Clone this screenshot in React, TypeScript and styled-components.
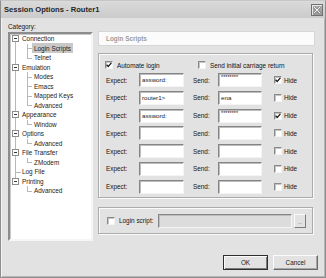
import styled, { createGlobalStyle, css } from "styled-components";

type TreeItem = {
  label: string;
  level: 0 | 1;
  expander?: boolean;
  selected?: boolean;
  last?: boolean;
};

const treeItems: TreeItem[] = [
  { label: "Connection", level: 0, expander: true },
  { label: "Login Scripts", level: 1, selected: true },
  { label: "Telnet", level: 1, last: true },
  { label: "Emulation", level: 0, expander: true },
  { label: "Modes", level: 1 },
  { label: "Emacs", level: 1 },
  { label: "Mapped Keys", level: 1 },
  { label: "Advanced", level: 1, last: true },
  { label: "Appearance", level: 0, expander: true },
  { label: "Window", level: 1, last: true },
  { label: "Options", level: 0, expander: true },
  { label: "Advanced", level: 1, last: true },
  { label: "File Transfer", level: 0, expander: true },
  { label: "ZModem", level: 1, last: true },
  { label: "Log File", level: 0 },
  { label: "Printing", level: 0, expander: true },
  { label: "Advanced", level: 1, last: true },
];

type ScriptRow = { expect: string; send: string; hide: boolean };

const scriptRows: ScriptRow[] = [
  { expect: "assword:", send: "********", hide: true },
  { expect: "router1>", send: "ena", hide: false },
  { expect: "assword:", send: "********", hide: true },
  { expect: "", send: "", hide: false },
  { expect: "", send: "", hide: false },
  { expect: "", send: "", hide: false },
  { expect: "", send: "", hide: false },
];

const GlobalStyle = createGlobalStyle`
  html, body {
    margin: 0;
    padding: 0;
    background: #ffffff;
  }
  body {
    font-family: "Liberation Sans", Arial, sans-serif;
    font-size: 6.4px;
    color: #141414;
  }
`;

const Window = styled.div`
  width: 326px;
  height: 278px;
  box-sizing: border-box;
  background: #e2e2e2;
  border: 1px solid #8e8e8e;
  border-top-color: #c6c6c6;
  box-shadow: inset 1px 1px 0 #f3f3f3, inset -1px -1px 0 #b6b6b6;
  display: flex;
  flex-direction: column;
`;

const TitleBar = styled.div`
  height: 17px;
  flex-shrink: 0;
  display: flex;
  align-items: center;
  justify-content: space-between;
  padding: 0 2px 0 3px;
  background: linear-gradient(#dadada, #cbcbcb);
`;

const TitleText = styled.span`
  font-weight: bold;
  font-size: 7.6px;
  color: #262626;
`;

const CloseButton = styled.div`
  width: 12px;
  height: 12px;
  box-sizing: border-box;
  margin-top: 1px;
  border: 1px solid #707070;
  background: linear-gradient(#b8b8b8, #999999);
  box-shadow: inset 1px 1px 0 #e6e6e6;
  display: flex;
  align-items: center;
  justify-content: center;
`;

const Body = styled.div`
  flex: 1;
  display: flex;
  flex-direction: column;
  padding: 4px 7px 0 7px;
`;

const Content = styled.div`
  display: flex;
  gap: 5px;
  align-items: flex-start;
`;

const LeftCol = styled.div`
  width: 85px;
  display: flex;
  flex-direction: column;
`;

const CategoryLabel = styled.div`
  height: 10px;
  line-height: 10px;
`;

const Tree = styled.div`
  height: 209px;
  box-sizing: border-box;
  background: #ffffff;
  border: 2px solid;
  border-color: #8c8c8c #f6f6f6 #f6f6f6 #8c8c8c;
  box-shadow: inset 1px 1px 0 #c9c9c9;
  display: flex;
  flex-direction: column;
`;

const TreeRow = styled.div`
  height: 9.5px;
  display: flex;
  align-items: stretch;
  color: #222222;
`;

const lineColor = "#b8b8b8";

const RootCell = styled.div<{ $top: boolean; $bottom: boolean; $dash?: boolean }>`
  position: relative;
  width: 10px;
  flex-shrink: 0;
  display: flex;
  align-items: center;
  padding-left: 2px;
  box-sizing: border-box;

  &::before {
    content: "";
    position: absolute;
    left: 5px;
    width: 1px;
    background: ${lineColor};
    top: ${(p) => (p.$top ? "0" : "50%")};
    bottom: ${(p) => (p.$bottom ? "0" : "50%")};
  }

  ${(p) =>
    p.$dash &&
    css`
      &::after {
        content: "";
        position: absolute;
        left: 5px;
        width: 6px;
        top: 50%;
        height: 1px;
        background: ${lineColor};
      }
    `}
`;

const Expander = styled.span`
  position: relative;
  z-index: 1;
  width: 7px;
  height: 7px;
  box-sizing: border-box;
  border: 1px solid #8c8c8c;
  background: #ffffff;

  &::after {
    content: "";
    position: absolute;
    left: 1px;
    right: 1px;
    top: 2px;
    height: 1px;
    background: #333333;
  }
`;

const ChildCell = styled.div<{ $last?: boolean }>`
  position: relative;
  width: 12px;
  flex-shrink: 0;

  &::before {
    content: "";
    position: absolute;
    left: 7px;
    top: 0;
    width: 1px;
    height: ${(p) => (p.$last ? "50%" : "100%")};
    background: ${lineColor};
  }

  &::after {
    content: "";
    position: absolute;
    left: 7px;
    top: 50%;
    width: 5px;
    height: 1px;
    background: ${lineColor};
  }
`;

const TreeLabel = styled.span<{ $selected?: boolean }>`
  display: flex;
  align-items: center;
  padding: 0 2px;
  background: ${(p) => (p.$selected ? "#c8c8c8" : "transparent")};
  height: 10px;
  align-self: center;
  white-space: nowrap;
`;

const RightCol = styled.div`
  width: 217px;
  margin-top: 9px;
  display: flex;
  flex-direction: column;
`;

const PageHeader = styled.div`
  height: 15px;
  box-sizing: border-box;
  background: #fbfbfb;
  border: 1px solid #d6d6d6;
  display: flex;
  align-items: center;
  padding-left: 7px;
  font-weight: bold;
  font-size: 6.4px;
  color: #9c9c9c;
`;

const GroupBox = styled.div<{ $gapTop: number }>`
  margin-top: ${(p) => p.$gapTop}px;
  margin-right: 2px;
  border: 1px solid #ababab;
  box-shadow: inset 1px 1px 0 #fafafa, 1px 1px 0 #fafafa;
  display: flex;
  flex-direction: column;
`;

const ScriptsBody = styled.div`
  padding: 6px 0 3px 6px;
  display: flex;
  flex-direction: column;
  gap: 3.75px;
`;

const OptionsRow = styled.div`
  height: 10px;
  display: flex;
  align-items: center;
  margin-bottom: -0.75px;
`;

const CheckOption = styled.label<{ $width?: number }>`
  display: flex;
  align-items: center;
  gap: 4px;
  width: ${(p) => (p.$width ? `${p.$width}px` : "auto")};
  white-space: nowrap;
`;

const CheckBox = styled.span`
  width: 8px;
  height: 8px;
  box-sizing: border-box;
  flex-shrink: 0;
  background: #ffffff;
  border: 1px solid;
  border-color: #8a8a8a #f4f4f4 #f4f4f4 #8a8a8a;
  box-shadow: inset 1px 1px 0 #c4c4c4;
  display: flex;
  align-items: center;
  justify-content: center;
`;

const ScriptRowBox = styled.div`
  height: 14px;
  display: flex;
  align-items: center;
`;

const RowLabel = styled.span<{ $width: number; $gap?: number }>`
  width: ${(p) => p.$width}px;
  margin-left: ${(p) => p.$gap ?? 0}px;
  flex-shrink: 0;
  padding-left: 1px;
`;

const Field = styled.div<{ $width: number; $disabled?: boolean; $small?: boolean }>`
  width: ${(p) => p.$width}px;
  height: 14px;
  box-sizing: border-box;
  flex-shrink: 0;
  background: ${(p) => (p.$disabled ? "#dcdcdc" : "#ffffff")};
  border: 1px solid;
  border-color: #858585 #f4f4f4 #f4f4f4 #858585;
  box-shadow: inset 1px 1px 0 #bdbdbd;
  padding: ${(p) => (p.$small ? "1px 0 0 2px" : "3px 0 0 2px")};
  font-size: ${(p) => (p.$small ? "5.5px" : "6.2px")};
  line-height: 1;
  color: #222222;
  overflow: hidden;
  white-space: nowrap;
`;

const HideOption = styled(CheckOption)`
  margin-left: 12px;
  gap: 2px;
`;

const LoginBody = styled.div`
  padding: 6px 0 5px 8px;
  display: flex;
  align-items: center;
`;

const BrowseButton = styled.div`
  width: 12px;
  height: 14px;
  margin-left: 2px;
  box-sizing: border-box;
  border: 1px solid;
  border-color: #fafafa #7c7c7c #7c7c7c #fafafa;
  background: #e2e2e2;
  display: flex;
  align-items: flex-end;
  justify-content: center;
  padding-bottom: 2px;
  font-size: 5px;
  color: #555;
`;

const ButtonRow = styled.div`
  margin-top: 14px;
  display: flex;
  justify-content: flex-end;
  gap: 5px;
`;

const DialogButton = styled.div<{ $default?: boolean }>`
  width: 45px;
  height: 15px;
  box-sizing: border-box;
  display: flex;
  align-items: center;
  justify-content: center;
  background: #e2e2e2;
  border: 1px solid;
  border-color: ${(p) => (p.$default ? "#2e2e2e" : "#fbfbfb #6a6a6a #6a6a6a #fbfbfb")};
  box-shadow: ${(p) =>
    p.$default
      ? "inset 1px 1px 0 #fbfbfb, inset -1px -1px 0 #7a7a7a"
      : "inset -1px -1px 0 #a6a6a6"};
  color: #1a1a1a;
`;

const Check = () => (
  <svg width="6" height="6" viewBox="0 0 6 6">
    <path d="M0.6 2.8 L2.2 4.5 L5.4 0.9" fill="none" stroke="#1a1a1a" strokeWidth="1.3" />
  </svg>
);

const CloseIcon = () => (
  <svg width="8" height="8" viewBox="0 0 8 8">
    <path d="M1 1 L7 7 M7 1 L1 7" stroke="#4a4a4a" strokeWidth="2.4" />
    <path d="M1 1 L7 7 M7 1 L1 7" stroke="#f2f2f2" strokeWidth="1.2" />
  </svg>
);

const CategoryTree = () => {
  const lastRootIndex = treeItems.map((t) => t.level).lastIndexOf(0);
  let parentIsLast = false;
  return (
    <Tree>
      {treeItems.map((item, i) => {
        if (item.level === 0) {
          parentIsLast = i === lastRootIndex;
          return (
            <TreeRow key={i}>
              <RootCell $top={i !== 0} $bottom={i !== lastRootIndex} $dash={!item.expander}>
                {item.expander && <Expander />}
              </RootCell>
              <TreeLabel>{item.label}</TreeLabel>
            </TreeRow>
          );
        }
        return (
          <TreeRow key={i}>
            <RootCell $top={!parentIsLast} $bottom={!parentIsLast} />
            <ChildCell $last={item.last} />
            <TreeLabel $selected={item.selected}>{item.label}</TreeLabel>
          </TreeRow>
        );
      })}
    </Tree>
  );
};

export default function App() {
  return (
    <>
      <GlobalStyle />
      <Window>
        <TitleBar>
          <TitleText>Session Options - Router1</TitleText>
          <CloseButton>
            <CloseIcon />
          </CloseButton>
        </TitleBar>
        <Body>
          <Content>
            <LeftCol>
              <CategoryLabel>Category:</CategoryLabel>
              <CategoryTree />
            </LeftCol>
            <RightCol>
              <PageHeader>Login Scripts</PageHeader>
              <GroupBox $gapTop={7}>
                <ScriptsBody>
                  <OptionsRow>
                    <CheckOption $width={93}>
                      <CheckBox>
                        <Check />
                      </CheckBox>
                      Automate login
                    </CheckOption>
                    <CheckOption>
                      <CheckBox />
                      Send initial carriage return
                    </CheckOption>
                  </OptionsRow>
                  {scriptRows.map((row, i) => (
                    <ScriptRowBox key={i}>
                      <RowLabel $width={33}>Expect:</RowLabel>
                      <Field $width={45}>{row.expect}</Field>
                      <RowLabel $width={25} $gap={8}>
                        Send:
                      </RowLabel>
                      <Field $width={44} $small={row.send.startsWith("*")}>
                        {row.send}
                      </Field>
                      <HideOption>
                        <CheckBox>{row.hide && <Check />}</CheckBox>
                        Hide
                      </HideOption>
                    </ScriptRowBox>
                  ))}
                </ScriptsBody>
              </GroupBox>
              <GroupBox $gapTop={9}>
                <LoginBody>
                  <CheckOption $width={51}>
                    <CheckBox />
                    Login script:
                  </CheckOption>
                  <Field $width={134} $disabled />
                  <BrowseButton>...</BrowseButton>
                </LoginBody>
              </GroupBox>
            </RightCol>
          </Content>
          <ButtonRow>
            <DialogButton $default>OK</DialogButton>
            <DialogButton>Cancel</DialogButton>
          </ButtonRow>
        </Body>
      </Window>
    </>
  );
}
